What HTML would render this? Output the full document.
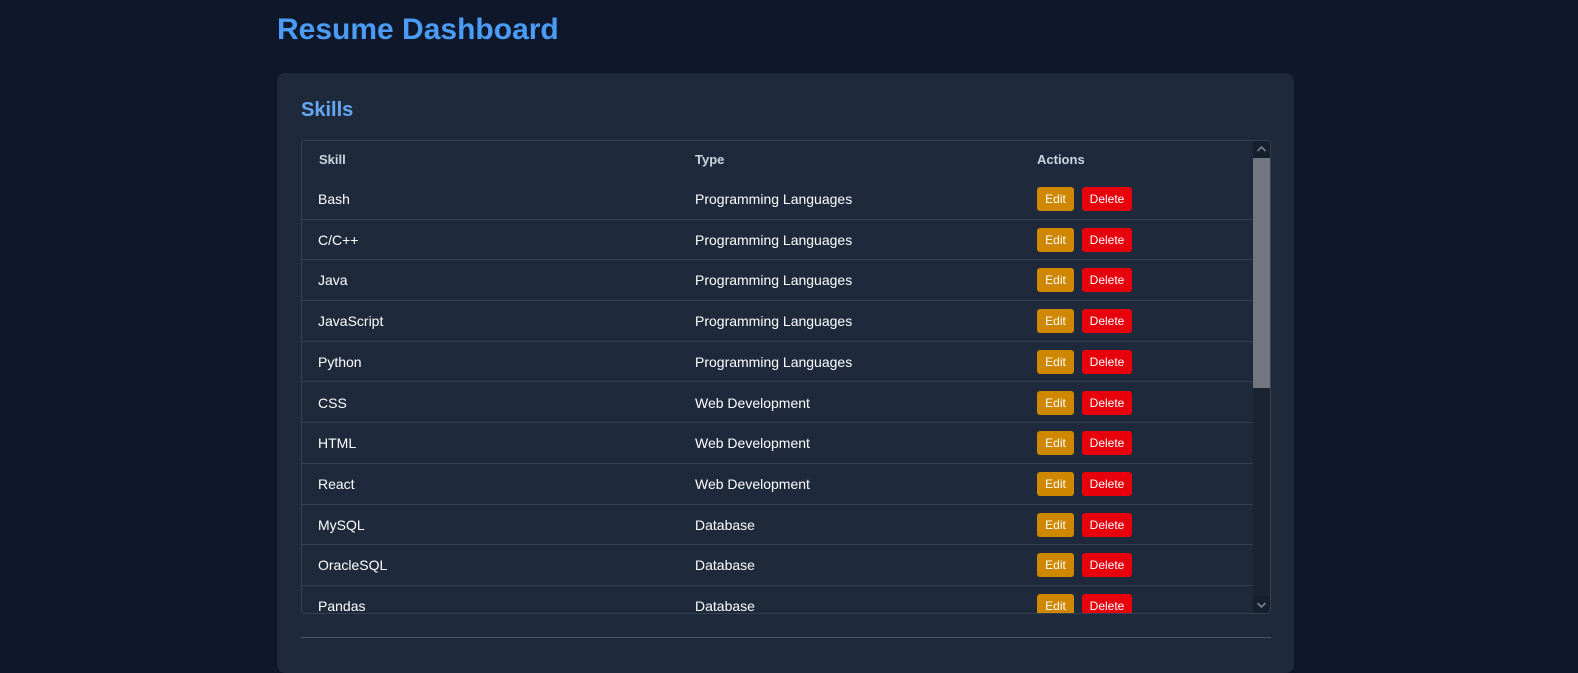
<!DOCTYPE html>
<html><head><meta charset="utf-8"><style>
*{box-sizing:border-box;margin:0;padding:0}
html,body{width:1578px;height:653px;overflow:hidden;background:#0f172a;font-family:"Liberation Sans",Arial,sans-serif}
h1{position:absolute;left:277px;top:13px;font-size:30px;font-weight:bold;color:#4a9cf5}
.card{position:absolute;left:277px;top:73px;width:1017px;height:600px;background:#1e293b;border-radius:8px}
h2{position:absolute;left:24px;top:26px;font-size:20px;font-weight:bold;color:#65a9f5}
.box{position:absolute;left:24px;top:67px;width:970px;height:474px;border:1px solid #334155;border-radius:4px;overflow:hidden}
.hd{position:absolute;left:0;top:0;width:951px;height:38px;font-size:13px;font-weight:bold;color:#cbd5e1}
.hd span,.row span{position:absolute;top:0;line-height:38px}
.row{position:absolute;left:0;width:951px;height:40.7px;border-bottom:1px solid #334155;color:#fff;font-size:14px}
.row span{line-height:40px}
.c1{left:16px}.c2{left:393px}.c3{left:735px}
.btn{position:absolute;top:8px;height:24px;line-height:24px;border-radius:3px;font-size:12px;color:#fff;text-align:center}
.e{left:735px;width:37px;background:#d08700}
.d{left:780px;width:50px;background:#e7000b}
.sb{position:absolute;left:951px;top:0;width:17px;height:472px;background:#1a2332}
.th{position:absolute;left:0;top:17px;width:17px;height:230px;background:#737780}
.ar{position:absolute;left:0;width:17px;height:17px;background:#161f2e}
.ar svg{display:block}
.hr{position:absolute;left:24px;top:564px;width:970px;height:1px;background:#475569}
</style></head><body>
<h1>Resume Dashboard</h1>
<div class="card">
<h2>Skills</h2>
<div class="box">
<div class="hd"><span class="c1" style="left:17px">Skill</span><span class="c2">Type</span><span class="c3">Actions</span></div>
<div class="row" style="top:38px"><span class="c1">Bash</span><span class="c2">Programming Languages</span><div class="btn e">Edit</div><div class="btn d">Delete</div></div>
<div class="row" style="top:78.7px"><span class="c1">C/C++</span><span class="c2">Programming Languages</span><div class="btn e">Edit</div><div class="btn d">Delete</div></div>
<div class="row" style="top:119.4px"><span class="c1">Java</span><span class="c2">Programming Languages</span><div class="btn e">Edit</div><div class="btn d">Delete</div></div>
<div class="row" style="top:160.1px"><span class="c1">JavaScript</span><span class="c2">Programming Languages</span><div class="btn e">Edit</div><div class="btn d">Delete</div></div>
<div class="row" style="top:200.8px"><span class="c1">Python</span><span class="c2">Programming Languages</span><div class="btn e">Edit</div><div class="btn d">Delete</div></div>
<div class="row" style="top:241.5px"><span class="c1">CSS</span><span class="c2">Web Development</span><div class="btn e">Edit</div><div class="btn d">Delete</div></div>
<div class="row" style="top:282.2px"><span class="c1">HTML</span><span class="c2">Web Development</span><div class="btn e">Edit</div><div class="btn d">Delete</div></div>
<div class="row" style="top:322.9px"><span class="c1">React</span><span class="c2">Web Development</span><div class="btn e">Edit</div><div class="btn d">Delete</div></div>
<div class="row" style="top:363.6px"><span class="c1">MySQL</span><span class="c2">Database</span><div class="btn e">Edit</div><div class="btn d">Delete</div></div>
<div class="row" style="top:404.3px"><span class="c1">OracleSQL</span><span class="c2">Database</span><div class="btn e">Edit</div><div class="btn d">Delete</div></div>
<div class="row" style="top:445px"><span class="c1">Pandas</span><span class="c2">Database</span><div class="btn e">Edit</div><div class="btn d">Delete</div></div>
<div class="sb"><div class="ar" style="top:0"><svg width="17" height="17"><path d="M4.5 10 L8.5 6 L12.5 10" fill="none" stroke="#7a8190" stroke-width="1.6"/></svg></div><div class="th"></div><div class="ar" style="top:455px"><svg width="17" height="17"><path d="M4.5 7 L8.5 11 L12.5 7" fill="none" stroke="#7a8190" stroke-width="1.6"/></svg></div></div>
</div>
<div class="hr"></div>
</div>
</body></html>
